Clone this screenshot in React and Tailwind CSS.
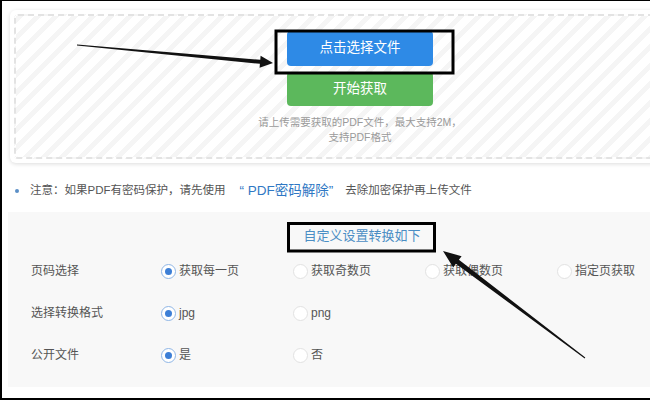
import React from 'react'

const font = "font-['Liberation_Sans','Noto_Sans_CJK_SC',sans-serif]"

const Radio = ({ checked, label }) => (
  <div className="w-[132px] flex items-center gap-[3px] shrink-0">
    <span
      className={
        checked
          ? 'w-[15px] h-[15px] rounded-full border border-[#8fb6e6] bg-white flex items-center justify-center'
          : 'w-[15px] h-[15px] rounded-full border border-[#e2e2e2] bg-white'
      }
    >
      {checked && <span className="w-[7px] h-[7px] rounded-full bg-[#3d7fd6]" />}
    </span>
    <span className="text-[12px] text-[#555]">{label}</span>
  </div>
)

const rows = [
  { label: '页码选择', options: ['获取每一页', '获取奇数页', '获取偶数页', '指定页获取'] },
  { label: '选择转换格式', options: ['jpg', 'png'] },
  { label: '公开文件', options: ['是', '否'] },
]

export default function App() {
  return (
    <div className={`relative w-[650px] h-[400px] overflow-hidden bg-white ${font}`}>
      <div className="w-full h-full border-l-2 border-t border-b-2 border-black">
        {/* Upload box */}
        <div className="mt-[9px] ml-[8px] w-[700px] h-[153px] rounded-[6px] bg-white p-[4px] shadow-[0_1px_4px_rgba(0,0,0,0.14)]">
          <div className="h-full rounded-[4px] border-2 border-dashed border-[#e3e3e3] bg-[repeating-linear-gradient(135deg,#f5f5f5_0px,#f5f5f5_5px,#ffffff_5px,#ffffff_13px)] flex flex-col items-center pt-[15px]">
            <button className="w-[146px] h-[35px] rounded-[4px] bg-[#2e8ae6] text-white text-[13.5px]">
              点击选择文件
            </button>
            <button className="mt-[6px] w-[146px] h-[34px] rounded-[4px] bg-[#5cb85c] text-white text-[13.5px]">
              开始获取
            </button>
            <p className="mt-[9px] text-[10.5px] leading-[15px] text-[#9a9a9a] text-center">
              请上传需要获取的PDF文件，最大支持2M，
              <br />
              支持PDF格式
            </p>
          </div>
        </div>

        {/* Note */}
        <div className="mt-[18px] h-[20px] ml-[13px] flex items-center text-[11.5px] text-[#555]">
          <span className="w-[4px] h-[4px] rounded-full bg-[#5b8fc7] mr-[11px]" />
          <span>注意：如果PDF有密码保护，请先使用</span>
          <span className="ml-[14px] text-[13.5px] text-[#2f78c4]">“ PDF密码解除”</span>
          <span className="ml-[12px]">去除加密保护再上传文件</span>
        </div>

        {/* Settings */}
        <div className="mt-[11px] ml-[6px] w-[708px] h-[175px] bg-[#f8f8f8]">
          <div className="pt-[10px] h-[38px] flex justify-center">
            <div className="h-[28px] flex items-center text-[13px] text-[#4b8ec4]">自定义设置转换如下</div>
          </div>
          {rows.map(row => (
            <div key={row.label} className="h-[42px] flex items-center">
              <div className="w-[153px] pl-[23px] text-[12px] text-[#555] shrink-0">{row.label}</div>
              {row.options.map((o, i) => (
                <Radio key={o} checked={i === 0} label={o} />
              ))}
            </div>
          ))}
        </div>
      </div>

      {/* Annotations */}
      <svg className="absolute top-0 left-0 pointer-events-none" width="650" height="400" viewBox="0 0 650 400">
        <rect x="276" y="31" width="177" height="42" fill="none" stroke="#000" strokeWidth="3" />
        <rect x="288.5" y="223.5" width="146" height="27.5" fill="none" stroke="#000" strokeWidth="3" />
        <polygon
          fill="#111"
          points="273,63 259.6,67.8 259.9,63.8 76.95,45.5 77.05,44.5 260.3,59.8 260.6,55.8"
        />
        <polygon
          fill="#111"
          points="443,251 461.6,256.2 458.9,259.8 585.3,357.6 584.7,358.4 455.9,263.8 453.2,267.4"
        />
      </svg>
    </div>
  )
}
